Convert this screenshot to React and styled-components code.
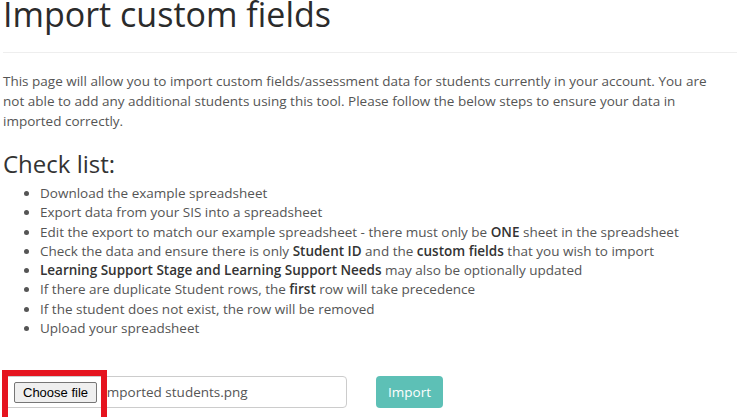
import React from 'react';
import styled, { createGlobalStyle } from 'styled-components';

const GlobalStyle = createGlobalStyle`
  html, body {
    margin: 0;
    padding: 0;
    background: #fff;
  }
  body {
    font-family: "Open Sans", "Liberation Sans", sans-serif;
    font-size: 13.5px;
    color: #555;
  }
`;

const Page = styled.div`
  padding: 0 3px;
  overflow: hidden;
  height: 417px;
`;

const Title = styled.h1`
  margin: -7px -3px 0 0;
  font-size: 34px;
  font-weight: 400;
  line-height: 42px;
  color: #2b2b2b;
  padding-bottom: 17px;
  border-bottom: 1px solid #eee;
`;

const Intro = styled.p`
  margin: 18px 0 0;
  max-width: 712px;
  line-height: 20px;
  color: #555;
`;

const SubTitle = styled.h3`
  margin: 18px 0 0;
  font-size: 24px;
  font-weight: 400;
  line-height: 30px;
  color: #333;
`;

const CheckList = styled.ul`
  margin: 5px 0 0;
  padding-left: 37px;
  line-height: 19.3px;

  strong {
    font-weight: 600;
    color: #333;
  }
`;

const UploadRow = styled.form`
  display: flex;
  align-items: center;
  gap: 29px;
  margin-top: 38px;
`;

const FileField = styled.div`
  position: relative;
  width: 344px;
  height: 32px;
  box-sizing: border-box;
  border: 1px solid #ccc;
  border-radius: 4px;
  display: flex;
  align-items: center;
  padding-left: 10px;
  gap: 6px;
`;

const ChooseButton = styled.span`
  font-family: "Liberation Sans", Arial, sans-serif;
  font-size: 13px;
  color: #000;
  background: #efefef;
  border: 1px solid #767676;
  border-radius: 2px;
  padding: 1px 8px;
  line-height: 17px;
`;

const FileName = styled.span`
  color: #555;
  font-size: 13.5px;
`;

const Highlight = styled.div`
  position: absolute;
  left: -2px;
  top: -7px;
  width: 105px;
  height: 60px;
  box-sizing: border-box;
  border: 6px solid #e5141f;
  pointer-events: none;
`;

const ImportButton = styled.button`
  font-family: "Open Sans", sans-serif;
  font-size: 13.5px;
  color: #fff;
  background: #5dc0b6;
  border: none;
  border-radius: 4px;
  width: 67px;
  height: 32px;
  padding: 0;
`;

const items = [
  <>Download the example spreadsheet</>,
  <>Export data from your SIS into a spreadsheet</>,
  <>Edit the export to match our example spreadsheet - there must only be <strong>ONE</strong> sheet in the spreadsheet</>,
  <>Check the data and ensure there is only <strong>Student ID</strong> and the <strong>custom fields</strong> that you wish to import</>,
  <><strong>Learning Support Stage and Learning Support Needs</strong> may also be optionally updated</>,
  <>If there are duplicate Student rows, the <strong>first</strong> row will take precedence</>,
  <>If the student does not exist, the row will be removed</>,
  <>Upload your spreadsheet</>,
];

export default function App() {
  return (
    <Page>
      <GlobalStyle />
      <Title>Import custom fields</Title>
      <Intro>
        This page will allow you to import custom fields/assessment data for students currently in your account. You are
        not able to add any additional students using this tool. Please follow the below steps to ensure your data in
        imported correctly.
      </Intro>
      <SubTitle>Check list:</SubTitle>
      <CheckList>
        {items.map((item, i) => (
          <li key={i}>{item}</li>
        ))}
      </CheckList>
      <UploadRow onSubmit={(e) => e.preventDefault()}>
        <FileField>
          <ChooseButton>Choose file</ChooseButton>
          <FileName>Imported students.png</FileName>
          <Highlight />
        </FileField>
        <ImportButton type="submit">Import</ImportButton>
      </UploadRow>
    </Page>
  );
}
